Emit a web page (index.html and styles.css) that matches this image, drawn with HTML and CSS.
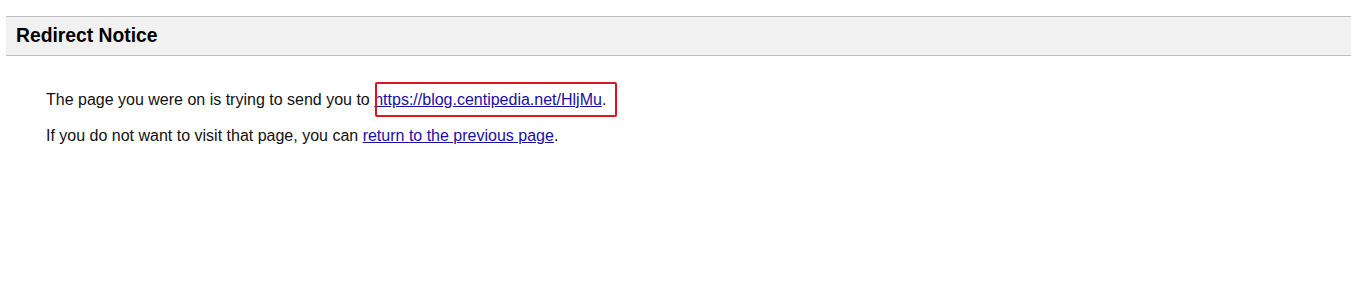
FILE: index.html
```html
<!DOCTYPE html>
<html lang="en">
<head>
  <meta charset="UTF-8">
  <title>Redirect Notice</title>
  <link rel="stylesheet" href="styles.css">
</head>
<body>
  <div class="notice-header">
    <h1>Redirect Notice</h1>
  </div>

  <div class="notice-body">
    <p>
      The page you were on is trying to send you to
      <span class="target">
        <a href="#">https://blog.centipedia.net/HljMu</a>.
        <span class="highlight"></span>
      </span>
    </p>
    <p>
      If you do not want to visit that page, you can
      <a href="#">return to the previous page</a>.
    </p>
  </div>
</body>
</html>
```

FILE: styles.css
```css
/* ---------- base ---------- */
* {
  box-sizing: border-box;
  margin: 0;
  padding: 0;
}
body {
  background: #ffffff;
  color: #111;
  font-family: "Liberation Sans", Arial, sans-serif;
  padding-top: 16px;
  padding-left: 6px;
}

/* ---------- header bar ---------- */
.notice-header {
  background: #f1f1f1;
  border-top: 1px solid #bdbdbd;
  border-bottom: 1px solid #bdbdbd;
  height: 40px;
  display: flex;
  align-items: center;
  padding-left: 10px;
}
.notice-header h1 {
  font-size: 19.3px;
  font-weight: 700;
  color: #000;
}

/* ---------- body text ---------- */
.notice-body {
  padding: 34px 0 0 40px;
  font-size: 16px;
}
.notice-body p {
  line-height: 19px;
  margin-bottom: 17px;
}
.notice-body a {
  color: #1a0dab;
  text-decoration: underline;
}

/* red box drawn over the target link */
.target {
  position: relative;
}
.highlight {
  position: absolute;
  left: 1px;
  top: -9px;
  width: 242px;
  height: 35px;
  border: 2px solid #e0141e;
  border-radius: 2px;
}
```
